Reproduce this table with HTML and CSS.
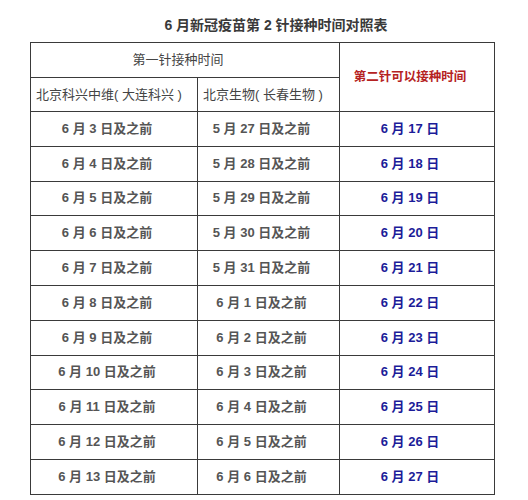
FILE: index.html
```html
<!DOCTYPE html>
<html lang="zh">
<head>
<meta charset="utf-8">
<title>6 月新冠疫苗第 2 针接种时间对照表</title>
<link rel="stylesheet" href="styles.css">
</head>
<body>
<h1 class="title">6 月新冠疫苗第 2 针接种时间对照表</h1>
<table class="schedule">
  <colgroup>
    <col class="c1"><col class="c2"><col class="c3">
  </colgroup>
  <thead>
    <tr class="h1row">
      <th colspan="2" class="group">第一针接种时间</th>
      <th rowspan="2" class="second">第二针可以接种时间</th>
    </tr>
    <tr class="h2row">
      <th class="sub">北京科兴中维( 大连科兴 )</th>
      <th class="sub">北京生物( 长春生物 )</th>
    </tr>
  </thead>
  <tbody>
    <tr><td>6 月 3 日及之前</td><td>5 月 27 日及之前</td><td class="date">6 月 17 日</td></tr>
    <tr><td>6 月 4 日及之前</td><td>5 月 28 日及之前</td><td class="date">6 月 18 日</td></tr>
    <tr><td>6 月 5 日及之前</td><td>5 月 29 日及之前</td><td class="date">6 月 19 日</td></tr>
    <tr><td>6 月 6 日及之前</td><td>5 月 30 日及之前</td><td class="date">6 月 20 日</td></tr>
    <tr><td>6 月 7 日及之前</td><td>5 月 31 日及之前</td><td class="date">6 月 21 日</td></tr>
    <tr><td>6 月 8 日及之前</td><td>6 月 1 日及之前</td><td class="date">6 月 22 日</td></tr>
    <tr><td>6 月 9 日及之前</td><td>6 月 2 日及之前</td><td class="date">6 月 23 日</td></tr>
    <tr><td>6 月 10 日及之前</td><td>6 月 3 日及之前</td><td class="date">6 月 24 日</td></tr>
    <tr><td>6 月 11 日及之前</td><td>6 月 4 日及之前</td><td class="date">6 月 25 日</td></tr>
    <tr><td>6 月 12 日及之前</td><td>6 月 5 日及之前</td><td class="date">6 月 26 日</td></tr>
    <tr><td>6 月 13 日及之前</td><td>6 月 6 日及之前</td><td class="date">6 月 27 日</td></tr>
  </tbody>
</table>
</body>
</html>
```
FILE: styles.css
```css
html, body {
  margin: 0;
  padding: 0;
  background: #ffffff;
}
body {
  font-family: "Liberation Sans", "Noto Sans CJK SC", sans-serif;
  color: #444;
}
.title {
  margin: 0;
  height: 42px;
  box-sizing: border-box;
  padding: 15px 0 0 24px;
  text-align: center;
  font-size: 14px;
  line-height: 20px;
  font-weight: bold;
  color: #3a3a3a;
}
.schedule {
  margin-left: 30px;
  width: 464px;
  border-collapse: collapse;
  table-layout: fixed;
}
.c1 { width: 167px; }
.c2 { width: 142px; }
.c3 { width: 155px; }
.schedule th,
.schedule td {
  border: 1px solid #3a3a3a;
  padding: 0 14px 0 0;
  text-align: center;
  font-size: 13px;
  line-height: 18px;
}
.schedule th {
  font-weight: normal;
  color: #444;
}
.h1row th { height: 34px; }
.h2row th { height: 33px; }
.schedule th.sub {
  text-align: left;
  padding: 0 0 0 5px;
}
.schedule th.second {
  color: #b52222;
  font-weight: bold;
  font-size: 12.5px;
}
.schedule td {
  height: 33.8px;
  font-weight: bold;
  color: #555;
}
.schedule td.date {
  color: #1c1c99;
}
```
